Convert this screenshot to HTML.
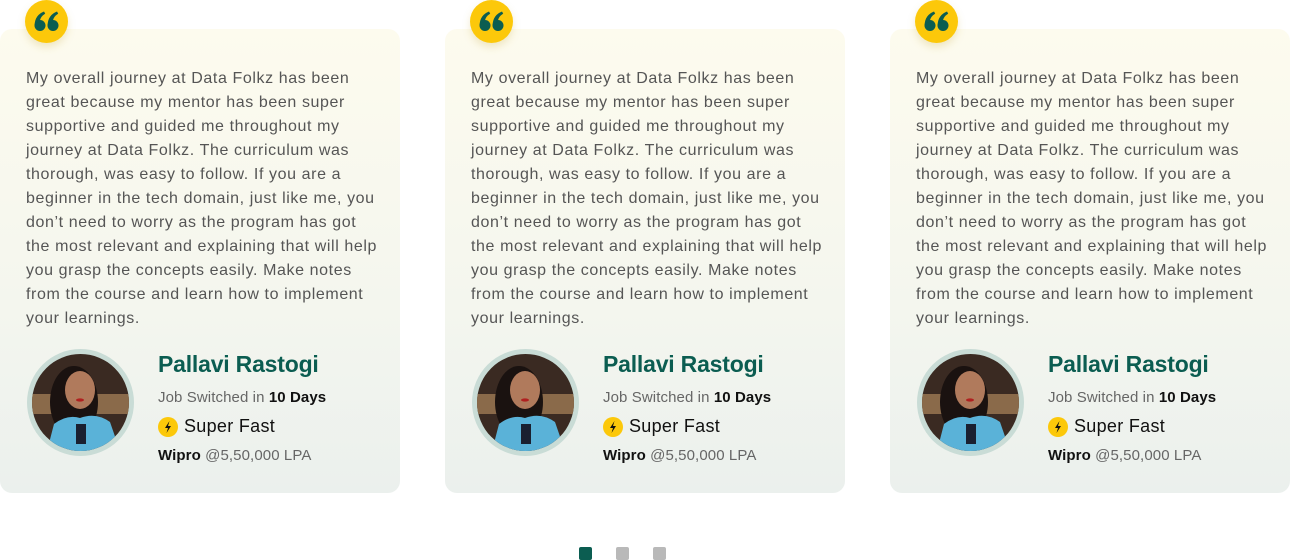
<!DOCTYPE html>
<html><head><meta charset="utf-8"><style>
*{margin:0;padding:0;box-sizing:border-box}
body{width:1290px;height:560px;background:#fff;font-family:"Liberation Sans",sans-serif;position:relative;overflow:hidden}
.card{position:absolute;top:29px;width:400px;height:464px;border-radius:12px;background:linear-gradient(180deg,#fdfbee 0%,#f4f6ee 60%,#ebf0ed 100%)}
.q{position:absolute;top:0;width:43px;height:43px;border-radius:50%;background:#fcc80a;box-shadow:0 4px 8px rgba(200,170,60,.25);z-index:5}
.q svg{position:absolute;left:9px;top:11px}
.txt{position:absolute;left:26px;top:38px;font-size:16px;line-height:24px;color:#555;white-space:nowrap;letter-spacing:0.6px}
.av{position:absolute;left:27px;top:320px;width:107px;height:107px;border-radius:50%;background:#c9dcd6;padding:5px}
.av svg{display:block;border-radius:50%}
.name{position:absolute;left:158px;top:322px;font-size:23px;font-weight:bold;color:#0b5d51;letter-spacing:-0.2px}
.job{position:absolute;left:158px;top:360px;font-size:15px;color:#666;letter-spacing:0.1px}
.job b{color:#111}
.sf{position:absolute;left:158px;top:387px;font-size:18px;color:#111;display:flex;align-items:center;letter-spacing:0.3px}
.sf i{display:inline-block;width:20px;height:20px;border-radius:50%;background:#fcc80a;margin-right:6px;position:relative}
.wp{position:absolute;left:158px;top:418px;font-size:15px;color:#666;letter-spacing:0.1px}
.wp b{color:#111}
.dot{position:absolute;top:547px;width:13px;height:13px;border-radius:2px;background:#b9b9b9}
</style></head><body>

<div class="q" style="left:25px"><svg width="26" height="21" viewBox="0 0 26 21"><g fill="#0b5d51"><circle cx="6" cy="14.5" r="5.5"/><path d="M0.6 14 Q1 4 10 0.5 L11.2 2.6 Q6 6 6 10 Z"/><circle cx="19" cy="14.5" r="5.5"/><path d="M13.6 14 Q14 4 23 0.5 L24.2 2.6 Q19 6 19 10 Z"/></g></svg></div>
<div class="q" style="left:470px"><svg width="26" height="21" viewBox="0 0 26 21"><g fill="#0b5d51"><circle cx="6" cy="14.5" r="5.5"/><path d="M0.6 14 Q1 4 10 0.5 L11.2 2.6 Q6 6 6 10 Z"/><circle cx="19" cy="14.5" r="5.5"/><path d="M13.6 14 Q14 4 23 0.5 L24.2 2.6 Q19 6 19 10 Z"/></g></svg></div>
<div class="q" style="left:915px"><svg width="26" height="21" viewBox="0 0 26 21"><g fill="#0b5d51"><circle cx="6" cy="14.5" r="5.5"/><path d="M0.6 14 Q1 4 10 0.5 L11.2 2.6 Q6 6 6 10 Z"/><circle cx="19" cy="14.5" r="5.5"/><path d="M13.6 14 Q14 4 23 0.5 L24.2 2.6 Q19 6 19 10 Z"/></g></svg></div>

<div class="card" style="left:0">
<div class="txt">My overall journey at Data Folkz has been<br>great because my mentor has been super<br>supportive and guided me throughout my<br>journey at Data Folkz. The curriculum was<br>thorough, was easy to follow. If you are a<br>beginner in the tech domain, just like me, you<br>don’t need to worry as the program has got<br>the most relevant and explaining that will help<br>you grasp the concepts easily. Make notes<br>from the course and learn how to implement<br>your learnings.</div>
<div class="av"><svg width="97" height="97" viewBox="0 0 97 97"><rect width="97" height="97" fill="#3a2a22"/><rect x="0" y="40" width="97" height="20" fill="#8a6a4a"/><ellipse cx="42" cy="48" rx="24" ry="36" fill="#1a1210"/><ellipse cx="48" cy="36" rx="15" ry="19" fill="#b07a5c"/><ellipse cx="48" cy="46" rx="4" ry="1.6" fill="#b02020"/><path d="M15 97 L22 70 Q35 60 48 64 Q64 58 78 68 L88 97 Z" fill="#5ab2d8"/><rect x="44" y="70" width="10" height="20" fill="#1a2030"/></svg></div>
<div class="name">Pallavi Rastogi</div>
<div class="job">Job Switched in <b>10 Days</b></div>
<div class="sf"><i><svg width="20" height="20" viewBox="0 0 20 20"><path d="M11.5 4 L7 11 H10 L8.5 16 L13 9 H10 Z" fill="#111"/></svg></i>Super Fast</div>
<div class="wp"><b>Wipro</b> @5,50,000 LPA</div>
</div>

<div class="card" style="left:445px">
<div class="txt">My overall journey at Data Folkz has been<br>great because my mentor has been super<br>supportive and guided me throughout my<br>journey at Data Folkz. The curriculum was<br>thorough, was easy to follow. If you are a<br>beginner in the tech domain, just like me, you<br>don’t need to worry as the program has got<br>the most relevant and explaining that will help<br>you grasp the concepts easily. Make notes<br>from the course and learn how to implement<br>your learnings.</div>
<div class="av"><svg width="97" height="97" viewBox="0 0 97 97"><rect width="97" height="97" fill="#3a2a22"/><rect x="0" y="40" width="97" height="20" fill="#8a6a4a"/><ellipse cx="42" cy="48" rx="24" ry="36" fill="#1a1210"/><ellipse cx="48" cy="36" rx="15" ry="19" fill="#b07a5c"/><ellipse cx="48" cy="46" rx="4" ry="1.6" fill="#b02020"/><path d="M15 97 L22 70 Q35 60 48 64 Q64 58 78 68 L88 97 Z" fill="#5ab2d8"/><rect x="44" y="70" width="10" height="20" fill="#1a2030"/></svg></div>
<div class="name">Pallavi Rastogi</div>
<div class="job">Job Switched in <b>10 Days</b></div>
<div class="sf"><i><svg width="20" height="20" viewBox="0 0 20 20"><path d="M11.5 4 L7 11 H10 L8.5 16 L13 9 H10 Z" fill="#111"/></svg></i>Super Fast</div>
<div class="wp"><b>Wipro</b> @5,50,000 LPA</div>
</div>

<div class="card" style="left:890px">
<div class="txt">My overall journey at Data Folkz has been<br>great because my mentor has been super<br>supportive and guided me throughout my<br>journey at Data Folkz. The curriculum was<br>thorough, was easy to follow. If you are a<br>beginner in the tech domain, just like me, you<br>don’t need to worry as the program has got<br>the most relevant and explaining that will help<br>you grasp the concepts easily. Make notes<br>from the course and learn how to implement<br>your learnings.</div>
<div class="av"><svg width="97" height="97" viewBox="0 0 97 97"><rect width="97" height="97" fill="#3a2a22"/><rect x="0" y="40" width="97" height="20" fill="#8a6a4a"/><ellipse cx="42" cy="48" rx="24" ry="36" fill="#1a1210"/><ellipse cx="48" cy="36" rx="15" ry="19" fill="#b07a5c"/><ellipse cx="48" cy="46" rx="4" ry="1.6" fill="#b02020"/><path d="M15 97 L22 70 Q35 60 48 64 Q64 58 78 68 L88 97 Z" fill="#5ab2d8"/><rect x="44" y="70" width="10" height="20" fill="#1a2030"/></svg></div>
<div class="name">Pallavi Rastogi</div>
<div class="job">Job Switched in <b>10 Days</b></div>
<div class="sf"><i><svg width="20" height="20" viewBox="0 0 20 20"><path d="M11.5 4 L7 11 H10 L8.5 16 L13 9 H10 Z" fill="#111"/></svg></i>Super Fast</div>
<div class="wp"><b>Wipro</b> @5,50,000 LPA</div>
</div>

<div class="dot" style="left:579px;background:#0b5d51"></div>
<div class="dot" style="left:616px"></div>
<div class="dot" style="left:653px"></div>
</body></html>
